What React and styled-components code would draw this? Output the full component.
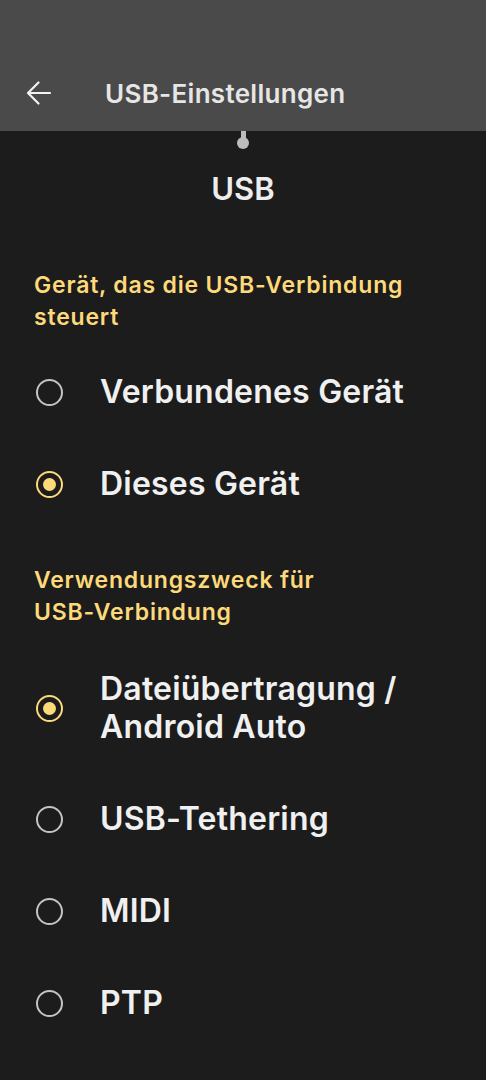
import React from "react";
import styled, { createGlobalStyle } from "styled-components";

const Global = createGlobalStyle`
  html, body { margin: 0; padding: 0; background: #1c1c1c; }
  body { font-family: Inter, Roboto, "Noto Sans", sans-serif; -webkit-font-smoothing: antialiased; }
`;

const Page = styled.div`
  width: 486px;
  min-height: 1080px;
  background: #1c1c1c;
  overflow: hidden;
`;

const Header = styled.header`
  height: 131px;
  background: #4a4a4a;
  display: flex;
  align-items: flex-end;
`;

const HeaderRow = styled.div`
  height: 76px;
  width: 100%;
  display: flex;
  align-items: center;
  padding-left: 26px;
  box-sizing: border-box;
`;

const BackButton = styled.button`
  width: 26px;
  height: 26px;
  padding: 0;
  border: 0;
  background: transparent;
  display: flex;
  align-items: center;
  justify-content: center;
  margin-right: 53px;
`;

const Title = styled.h1`
  margin: 0;
  font-size: 26px;
  font-weight: 600;
  letter-spacing: 0.3px;
  color: #e6e6e6;
`;

const Connector = styled.div`
  display: flex;
  flex-direction: column;
  align-items: center;
  height: 18px;
`;

const Stem = styled.div`
  width: 5px;
  height: 8px;
  background: #bdbdbd;
`;

const Knob = styled.div`
  width: 12px;
  height: 12px;
  border-radius: 50%;
  background: #bdbdbd;
  margin-top: -2px;
`;

const UsbTitle = styled.div`
  text-align: center;
  font-size: 31px;
  font-weight: 600;
  color: #ededed;
  line-height: 40px;
  margin-top: 20px;
`;

const SectionHeader = styled.div`
  padding: ${(p) => p.$top}px 40px 0 34px;
  margin-bottom: ${(p) => p.$bottom}px;
  font-size: 23px;
  font-weight: 600;
  letter-spacing: 0.8px;
  line-height: 32px;
  color: #fdd97a;
`;

const NoWrap = styled.span`
  white-space: nowrap;
`;

const Row = styled.div`
  display: flex;
  align-items: center;
  padding: 27px 30px 27px 36px;
`;

const Radio = styled.span`
  flex: none;
  width: 27px;
  height: 27px;
  box-sizing: border-box;
  border-radius: 50%;
  border: 2.5px solid ${(p) => (p.$checked ? "#fdd97a" : "#c4c4c4")};
  display: flex;
  align-items: center;
  justify-content: center;
  margin-right: 37px;
  &::after {
    content: "";
    display: ${(p) => (p.$checked ? "block" : "none")};
    width: 13px;
    height: 13px;
    border-radius: 50%;
    background: #fdd97a;
  }
`;

const Label = styled.span`
  font-size: 32px;
  font-weight: 600;
  letter-spacing: 0.2px;
  line-height: 38px;
  color: #f0f0f0;
`;

const Option = ({ checked, children }) => (
  <Row>
    <Radio $checked={checked} />
    <Label>{children}</Label>
  </Row>
);

export default function App() {
  return (
    <Page>
      <Global />
      <Header>
        <HeaderRow>
          <BackButton aria-label="Zurück">
            <svg width="26" height="26" viewBox="0 0 26 26" fill="none">
              <path d="M24 13H2.5M12.5 2.5L2 13l10.5 10.5" stroke="#f2f2f2" strokeWidth="2.2" strokeLinecap="round" strokeLinejoin="round" />
            </svg>
          </BackButton>
          <Title>USB-Einstellungen</Title>
        </HeaderRow>
      </Header>
      <Connector>
        <Stem />
        <Knob />
      </Connector>
      <UsbTitle>USB</UsbTitle>
      <SectionHeader $top={60} $bottom={13}>
        Gerät, das die <NoWrap>USB-Verbindung</NoWrap> steuert
      </SectionHeader>
      <Option>Verbundenes Gerät</Option>
      <Option checked>Dieses Gerät</Option>
      <SectionHeader $top={34} $bottom={15}>
        Verwendungszweck für <NoWrap>USB-Verbindung</NoWrap>
      </SectionHeader>
      <Option checked>
        Dateiübertragung /<br />Android Auto
      </Option>
      <Option>USB-Tethering</Option>
      <Option>MIDI</Option>
      <Option>PTP</Option>
    </Page>
  );
}
